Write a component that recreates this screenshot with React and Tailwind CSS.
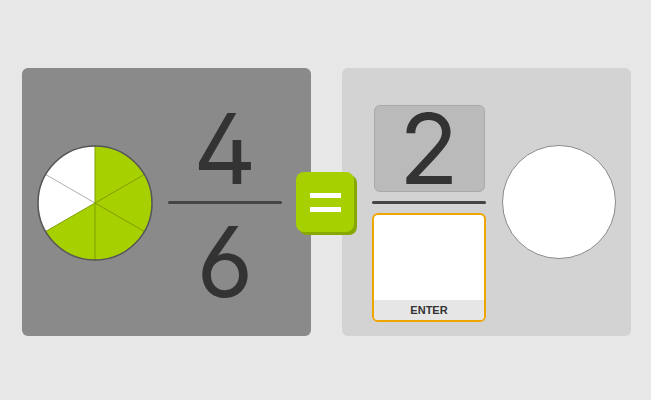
function Pie() {
  const c = 58;
  const r = 57;
  const pts = [0, 60, 120, 180, 240, 300].map((a) => {
    const t = (a * Math.PI) / 180;
    return [c + r * Math.sin(t), c - r * Math.cos(t)];
  });
  return (
    <svg width="116" height="116" viewBox="0 0 116 116">
      <circle cx={c} cy={c} r={r} fill="#ffffff" />
      <path d={`M${c} ${c} L${pts[0][0]} ${pts[0][1]} A${r} ${r} 0 1 1 ${pts[4][0]} ${pts[4][1]} Z`} fill="#a6d000" />
      <line x1={c} y1={c} x2={pts[5][0]} y2={pts[5][1]} stroke="#b0b0b0" strokeWidth="1" />
      {pts.slice(0, 5).map((p, i) => (
        <line key={i} x1={c} y1={c} x2={p[0]} y2={p[1]} stroke="#7f9f00" strokeWidth="1" />
      ))}
      <circle cx={c} cy={c} r={r} fill="none" stroke="#555555" strokeWidth="1.5" />
    </svg>
  );
}

const digit = "font-['Inter','DejaVu_Sans',sans-serif] text-[98px] leading-none text-[#333333] [font-feature-settings:'ss01','cv02']";

export default function App() {
  return (
    <div className="relative w-[651px] h-[400px] bg-[#e7e7e7] overflow-hidden">
      <div className="flex pt-[68px] pl-[22px] gap-[31px]">
        {/* left panel */}
        <div className="w-[289px] h-[268px] rounded-md bg-[#8a8a8a] flex items-start pl-[15px]">
          <div className="mt-[77px]">
            <Pie />
          </div>
          <div className="ml-[15px] mt-[37px] w-[114px] flex flex-col items-center">
            <div className="h-[87px] w-full flex items-center justify-center">
              <span className={digit}>4</span>
            </div>
            <div className="mt-[9px] h-[3px] w-full rounded-full bg-[#444444]" />
            <div className="mt-[9px] h-[109px] w-full flex justify-center">
              <span className={digit}>6</span>
            </div>
          </div>
        </div>

        {/* right panel */}
        <div className="w-[289px] h-[268px] rounded-md bg-[#d3d3d3] flex items-start pl-[30px]">
          <div className="mt-[37px] w-[114px] flex flex-col items-center">
            <div className="h-[87px] w-[111px] rounded-md bg-[#bababa] border border-[#a9a9a9] flex items-center justify-center">
              <span className={digit}>2</span>
            </div>
            <div className="mt-[9px] h-[3px] w-full rounded-full bg-[#444444]" />
            <div className="mt-[9px] h-[109px] w-full rounded-md border-2 border-[#f0a500] bg-white flex flex-col overflow-hidden">
              <div className="flex-1" />
              <div className="h-[20px] bg-[#e6e6e6] flex items-center justify-center font-['Liberation_Sans',sans-serif] font-bold text-[11px] text-[#333333]">
                ENTER
              </div>
            </div>
          </div>
          <div className="ml-[16px] mt-[77px] w-[114px] h-[114px] rounded-full bg-white border-[1.5px] border-[#8a8a8a]" />
        </div>
      </div>

      {/* equals button */}
      <div className="absolute left-[296px] top-[172px] w-[58px] h-[60px] rounded-lg bg-[#a6d000] shadow-[3px_3px_0_#86a800] flex flex-col items-center justify-center gap-[9px]">
        <div className="w-[31px] h-[5px] bg-white" />
        <div className="w-[31px] h-[5px] bg-white" />
      </div>
    </div>
  );
}
